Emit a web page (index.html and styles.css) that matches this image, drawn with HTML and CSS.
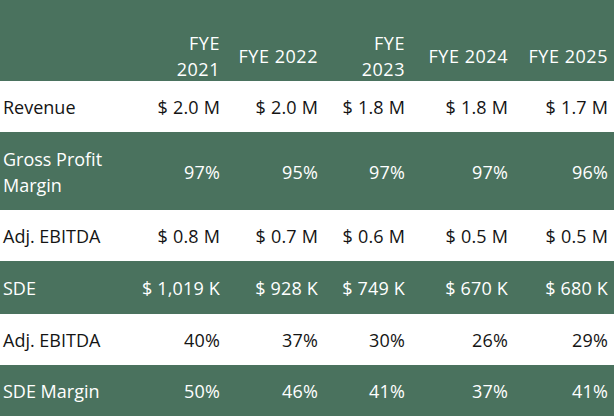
FILE: index.html
```html
<!DOCTYPE html>
<html lang="en">
<head>
<meta charset="utf-8">
<title>Financial Summary</title>
<link rel="stylesheet" href="styles.css">
</head>
<body>
<div class="table">
  <div class="row head">
    <div class="cell label"></div>
    <div class="cell year">FYE 2021</div>
    <div class="cell year">FYE 2022</div>
    <div class="cell year">FYE 2023</div>
    <div class="cell year">FYE 2024</div>
    <div class="cell year">FYE 2025</div>
  </div>
  <div class="row light">
    <div class="cell label">Revenue</div>
    <div class="cell">$ 2.0 M</div>
    <div class="cell">$ 2.0 M</div>
    <div class="cell">$ 1.8 M</div>
    <div class="cell">$ 1.8 M</div>
    <div class="cell">$ 1.7 M</div>
  </div>
  <div class="row dark tall">
    <div class="cell label">Gross Profit Margin</div>
    <div class="cell">97%</div>
    <div class="cell">95%</div>
    <div class="cell">97%</div>
    <div class="cell">97%</div>
    <div class="cell">96%</div>
  </div>
  <div class="row light">
    <div class="cell label">Adj. EBITDA</div>
    <div class="cell">$ 0.8 M</div>
    <div class="cell">$ 0.7 M</div>
    <div class="cell">$ 0.6 M</div>
    <div class="cell">$ 0.5 M</div>
    <div class="cell">$ 0.5 M</div>
  </div>
  <div class="row dark sde">
    <div class="cell label">SDE</div>
    <div class="cell">$ 1,019 K</div>
    <div class="cell">$ 928 K</div>
    <div class="cell">$ 749 K</div>
    <div class="cell">$ 670 K</div>
    <div class="cell">$ 680 K</div>
  </div>
  <div class="row light">
    <div class="cell label">Adj. EBITDA</div>
    <div class="cell">40%</div>
    <div class="cell">37%</div>
    <div class="cell">30%</div>
    <div class="cell">26%</div>
    <div class="cell">29%</div>
  </div>
  <div class="row dark">
    <div class="cell label">SDE Margin</div>
    <div class="cell">50%</div>
    <div class="cell">46%</div>
    <div class="cell">41%</div>
    <div class="cell">37%</div>
    <div class="cell">41%</div>
  </div>
</div>
</body>
</html>
```

FILE: styles.css
```css
html, body {
  margin: 0;
  padding: 0;
  background: #ffffff;
}

body {
  font-family: "Open Sans", "Liberation Sans", sans-serif;
  font-size: 18px;
  line-height: 26px;
  color: #141414;
}

.table {
  width: 614px;
  display: flex;
  flex-direction: column;
}

.row {
  display: grid;
  grid-template-columns: 134px 92px 98px 87px 103px 100px;
  align-items: center;
  height: 51px;
  padding-top: 1px;
  box-sizing: border-box;
}

.head {
  height: 81px;
  padding-top: 30px;
  background: #4a725e;
  color: #ffffff;
}

.dark {
  background: #4a725e;
  color: #ffffff;
}

.light {
  background: #ffffff;
}

.tall {
  height: 78px;
}

.sde {
  height: 53px;
}

.cell {
  text-align: right;
  padding: 0 6px 0 0;
  white-space: nowrap;
  letter-spacing: 0.01em;
}

.cell.year {
  white-space: normal;
  padding-left: 10px;
  letter-spacing: 0.03em;
}

.label {
  text-align: left;
  white-space: normal;
  padding: 0 4px 0 3px;
  letter-spacing: 0;
}
```
